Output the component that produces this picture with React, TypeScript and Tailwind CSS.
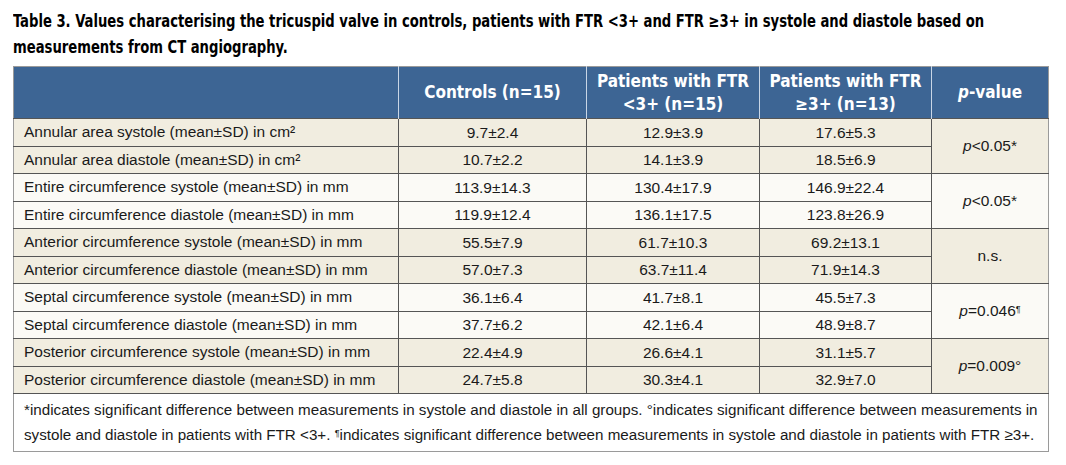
import React from "react";

type Row = {
  label: React.ReactNode;
  controls: string;
  lt3: string;
  ge3: string;
};

type Group = {
  rows: [Row, Row];
  p: React.ReactNode;
  bg: string;
};

const groups: Group[] = [
  {
    bg: "bg-[#f1ede0]",
    p: (
      <>
        <i>p</i>&lt;0.05*
      </>
    ),
    rows: [
      { label: <>Annular area systole (mean±SD) in cm²</>, controls: "9.7±2.4", lt3: "12.9±3.9", ge3: "17.6±5.3" },
      { label: <>Annular area diastole (mean±SD) in cm²</>, controls: "10.7±2.2", lt3: "14.1±3.9", ge3: "18.5±6.9" },
    ],
  },
  {
    bg: "bg-[#fbfaf6]",
    p: (
      <>
        <i>p</i>&lt;0.05*
      </>
    ),
    rows: [
      { label: "Entire circumference systole (mean±SD) in mm", controls: "113.9±14.3", lt3: "130.4±17.9", ge3: "146.9±22.4" },
      { label: "Entire circumference diastole (mean±SD) in mm", controls: "119.9±12.4", lt3: "136.1±17.5", ge3: "123.8±26.9" },
    ],
  },
  {
    bg: "bg-[#f1ede0]",
    p: "n.s.",
    rows: [
      { label: "Anterior circumference systole (mean±SD) in mm", controls: "55.5±7.9", lt3: "61.7±10.3", ge3: "69.2±13.1" },
      { label: "Anterior circumference diastole (mean±SD) in mm", controls: "57.0±7.3", lt3: "63.7±11.4", ge3: "71.9±14.3" },
    ],
  },
  {
    bg: "bg-[#fbfaf6]",
    p: (
      <>
        <i>p</i>=0.046<sup className="text-[9px]">¶</sup>
      </>
    ),
    rows: [
      { label: "Septal circumference systole (mean±SD) in mm", controls: "36.1±6.4", lt3: "41.7±8.1", ge3: "45.5±7.3" },
      { label: "Septal circumference diastole (mean±SD) in mm", controls: "37.7±6.2", lt3: "42.1±6.4", ge3: "48.9±8.7" },
    ],
  },
  {
    bg: "bg-[#f1ede0]",
    p: (
      <>
        <i>p</i>=0.009°
      </>
    ),
    rows: [
      { label: "Posterior circumference systole (mean±SD) in mm", controls: "22.4±4.9", lt3: "26.6±4.1", ge3: "31.1±5.7" },
      { label: "Posterior circumference diastole (mean±SD) in mm", controls: "24.7±5.8", lt3: "30.3±4.1", ge3: "32.9±7.0" },
    ],
  },
];

const condensed = {
  fontFamily: '"Liberation Sans Narrow", "DejaVu Sans Condensed", "Liberation Sans", sans-serif',
};

export default function App() {
  return (
    <div className="w-[1066px] h-[465px] bg-white pl-[13px] pt-[8px] text-[#1a1a1a] overflow-hidden">
      <h2
        className="inline-block origin-left scale-x-[0.861] whitespace-nowrap text-[17px] leading-[26px] font-bold text-black [font-stretch:condensed]"
        style={condensed}
      >
        Table 3. Values characterising the tricuspid valve in controls, patients with FTR &lt;3+ and FTR ≥3+ in systole and diastole based on
        <br />
        measurements from CT angiography.
      </h2>

      <table className="mt-[6px] w-[1035px] table-fixed border-collapse border border-[#9a9a9a] text-[15.5px] font-['Liberation_Sans',sans-serif]">
        <colgroup>
          <col className="w-[385px]" />
          <col className="w-[188px]" />
          <col className="w-[173px]" />
          <col className="w-[172px]" />
          <col className="w-[117px]" />
        </colgroup>
        <thead>
          <tr
            className="h-[52px] bg-[#3d6594] text-white font-bold text-[17px] leading-[23px] [font-stretch:condensed]"
            style={condensed}
          >
            <th className="border-r border-[#c9d6e6]"></th>
            <th className="border-r border-[#c9d6e6] font-bold">Controls (n=15)</th>
            <th className="border-r border-[#c9d6e6] font-bold">
              Patients with FTR
              <br />
              &lt;3+ (n=15)
            </th>
            <th className="border-r border-[#c9d6e6] font-bold">
              Patients with FTR
              <br />
              ≥3+ (n=13)
            </th>
            <th className="font-bold">
              <i>p</i>-value
            </th>
          </tr>
        </thead>
        <tbody>
          {groups.map((g, gi) =>
            g.rows.map((r, ri) => (
              <tr key={`${gi}-${ri}`} className={`h-[27.5px] ${g.bg}`}>
                <td className="border-t border-r border-[#555] pl-[10px] leading-[18px]">{r.label}</td>
                <td className="border-t border-r border-[#555] text-center">{r.controls}</td>
                <td className="border-t border-r border-[#555] text-center">{r.lt3}</td>
                <td className="border-t border-r border-[#555] text-center">{r.ge3}</td>
                {ri === 0 && (
                  <td rowSpan={2} className="border-t border-[#555] text-center">
                    {g.p}
                  </td>
                )}
              </tr>
            ))
          )}
          <tr className="bg-white">
            <td
              colSpan={5}
              className="border-t border-[#555] pl-[10px] pt-[3px] pb-[4px] text-[15.2px] leading-[25px] whitespace-nowrap"
            >
              *indicates significant difference between measurements in systole and diastole in all groups. °indicates significant difference between measurements in
              <br />
              systole and diastole in patients with FTR &lt;3+. <sup className="text-[9px]">¶</sup>indicates significant difference between measurements in systole and diastole in patients with FTR ≥3+.
            </td>
          </tr>
        </tbody>
      </table>
    </div>
  );
}
